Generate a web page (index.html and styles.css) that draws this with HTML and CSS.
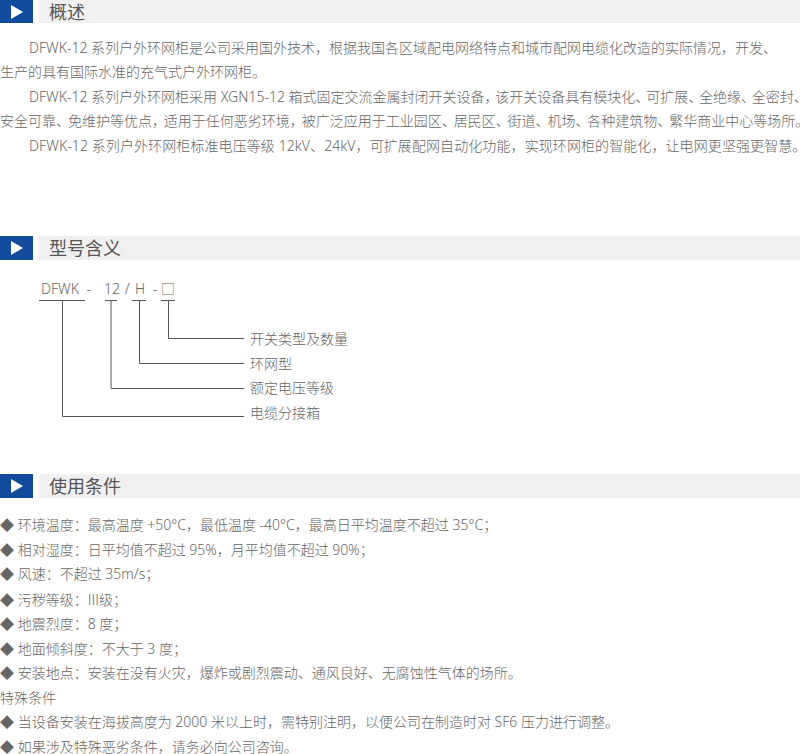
FILE: index.html
```
<!DOCTYPE html>
<html lang="zh-CN">
<head>
<meta charset="utf-8">
<title>DFWK-12</title>
<link rel="stylesheet" href="styles.css">
</head>
<body>
<section class="sec sec-intro">
  <header class="head head-first">
    <span class="tag"><svg width="12" height="14" viewBox="0 0 12 14"><path d="M0 0L12 7L0 14Z" fill="#fff"/></svg></span>
    <h2 class="title">概述</h2>
  </header>
  <div class="intro">
    <p class="ind">DFWK-12 系列户外环网柜是公司采用国外技术，根据我国各区域配电网络特点和城市配网电缆化改造的实际情况，开发、</p>
    <p>生产的具有国际水准的充气式户外环网柜。</p>
    <p class="ind tight">DFWK-12 系列户外环网柜采用 XGN15-12 箱式固定交流金属封闭开关设备<span class="pn">，</span>该开关设备具有模块化<span class="pn">、</span>可扩展<span class="pn">、</span>全绝缘<span class="pn">、</span>全密封<span class="end">、</span></p>
    <p>安全可靠<span class="pn">、</span>免维护等优点<span class="pn">，</span>适用于任何恶劣环境<span class="pn">，</span>被广泛应用于工业园区<span class="pn">、</span>居民区<span class="pn">、</span>街道<span class="pn">、</span>机场<span class="pn">、</span>各种建筑物<span class="pn">、</span>繁华商业中心等场所<span class="end">。</span></p>
    <p class="ind loose">DFWK-12 系列户外环网柜标准电压等级 12kV、24kV，可扩展配网自动化功能，实现环网柜的智能化，让电网更坚强更智慧<span class="end">。</span></p>
  </div>
</section>
<section class="sec sec-model">
  <header class="head">
    <span class="tag"><svg width="12" height="14" viewBox="0 0 12 14"><path d="M0 0L12 7L0 14Z" fill="#fff"/></svg></span>
    <h2 class="title">型号含义</h2>
  </header>
  <div class="diagram">
    <svg class="lines" width="360" height="170" viewBox="0 0 360 170">
      <g fill="none" stroke="#555" stroke-width="1">
        <path d="M39 40.5H85M62.500 40.5V156.500H244"/>
        <path d="M105 40.5H117M111 40.5V128.500H244"/>
        <path d="M132 40.5H146M139.500 40.5V103.500H244"/>
        <path d="M161 40.5H175M168.500 40.500V78.500H244"/>
      </g>
    </svg>
    <span class="code c1">DFWK -</span>
    <span class="code c2">12 /</span>
    <span class="code c3">H -</span>
    <span class="code c4">□</span>
    <span class="lab l1">开关类型及数量</span>
    <span class="lab l2">环网型</span>
    <span class="lab l3">额定电压等级</span>
    <span class="lab l4">电缆分接箱</span>
  </div>
</section>
<section class="sec sec-use">
  <header class="head">
    <span class="tag"><svg width="12" height="14" viewBox="0 0 12 14"><path d="M0 0L12 7L0 14Z" fill="#fff"/></svg></span>
    <h2 class="title">使用条件</h2>
  </header>
  <div class="list">
    <p>◆ 环境温度：最高温度 +50°C，最低温度 -40°C，最高日平均温度不超过 35°C；</p>
    <p>◆ 相对湿度：日平均值不超过 95%，月平均值不超过 90%；</p>
    <p>◆ 风速：不超过 35m/s；</p>
    <p>◆ 污秽等级：<span class="cjk">III</span>级；</p>
    <p>◆ 地震烈度：8 度；</p>
    <p>◆ 地面倾斜度：不大于 3 度；</p>
    <p>◆ 安装地点：安装在没有火灾，爆炸或剧烈震动、通风良好、无腐蚀性气体的场所。</p>
    <p>特殊条件</p>
    <p>◆ 当设备安装在海拔高度为 2000 米以上时，需特别注明，以便公司在制造时对 SF6 压力进行调整。</p>
    <p>◆ 如果涉及特殊恶劣条件，请务必向公司咨询。</p>
  </div>
</section>
</body>
</html>
```
FILE: styles.css
```
html, body { margin: 0; padding: 0; }
body {
  width: 800px;
  height: 754px;
  overflow: hidden;
  background: #fff;
  color: #666;
  font-family: "Noto Sans", "Noto Sans CJK SC", sans-serif;
  font-weight: 300;
  font-size: 14px;
  line-height: 24.5px;
}
p { margin: 0; white-space: nowrap; }
.head { display: flex; gap: 6px; height: 24px; }
.head-first { height: 23px; }
.tag {
  width: 33px;
  flex: none;
  background: #134b9c;
  display: flex;
  align-items: center;
  justify-content: center;
}
.title {
  flex: 1;
  margin: 0;
  padding-left: 10px;
  background: #f0f0f0;
  font-size: 18px;
  font-weight: 400;
  color: #555;
  line-height: 24px;
}
.intro { margin-top: 12.5px; }
.ind { text-indent: 29px; }
.loose { letter-spacing: 0.09px; }
.pn { letter-spacing: -2.1px; }
.tight .pn { letter-spacing: -3.2px; }
.end { letter-spacing: -10px; }
.cjk { font-family: "Noto Sans CJK SC", sans-serif; }
.sec-model { margin-top: 77.5px; }
.diagram { position: relative; height: 214px; }
.lines { position: absolute; left: 0; top: 0; }
.code, .lab { position: absolute; white-space: nowrap; }
.code { top: 17px; word-spacing: 4px; }
.c1 { left: 41px; }
.c2 { left: 104px; word-spacing: 1px; }
.c3 { left: 135px; }
.c4 { left: 161px; }
.lab { left: 250px; }
.l1 { top: 67px; }
.l2 { top: 92px; }
.l3 { top: 116px; }
.l4 { top: 141px; }
.list { margin-top: 15.5px; }
```
